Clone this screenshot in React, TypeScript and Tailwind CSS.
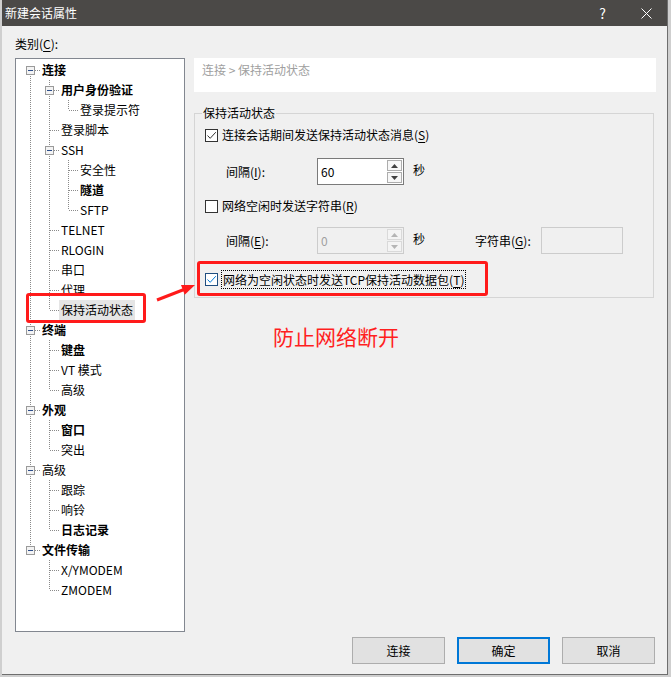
import type { ReactNode } from 'react'

type Node = {
  label: string
  bold?: boolean
  selected?: boolean
  children?: Node[]
}

type Row = {
  node: Node
  depth: number
  guides: boolean[]
  first: boolean
  last: boolean
}

const TREE: Node[] = [
  {
    label: '连接',
    bold: true,
    children: [
      { label: '用户身份验证', bold: true, children: [{ label: '登录提示符' }] },
      { label: '登录脚本' },
      {
        label: 'SSH',
        children: [{ label: '安全性' }, { label: '隧道', bold: true }, { label: 'SFTP' }],
      },
      { label: 'TELNET' },
      { label: 'RLOGIN' },
      { label: '串口' },
      { label: '代理' },
      { label: '保持活动状态', selected: true },
    ],
  },
  {
    label: '终端',
    bold: true,
    children: [{ label: '键盘', bold: true }, { label: 'VT 模式' }, { label: '高级' }],
  },
  {
    label: '外观',
    bold: true,
    children: [{ label: '窗口', bold: true }, { label: '突出' }],
  },
  {
    label: '高级',
    children: [{ label: '跟踪' }, { label: '响铃' }, { label: '日志记录', bold: true }],
  },
  {
    label: '文件传输',
    bold: true,
    children: [{ label: 'X/YMODEM' }, { label: 'ZMODEM' }],
  },
]

function flatten(nodes: Node[], depth: number, guides: boolean[]): Row[] {
  const rows: Row[] = []
  nodes.forEach((node, i) => {
    const last = i === nodes.length - 1
    rows.push({ node, depth, guides, first: i === 0, last })
    if (node.children) {
      rows.push(...flatten(node.children, depth + 1, [...guides, !last]))
    }
  })
  return rows
}

const DOT = '#8a8a8a'

function GuideCell({ line }: { line: boolean }) {
  return (
    <svg width={19} height={20} className="shrink-0">
      {line && <line x1={9.5} y1={0} x2={9.5} y2={20} stroke={DOT} strokeDasharray="1 1" />}
    </svg>
  )
}

function NodeCell({ row }: { row: Row }) {
  const top = row.depth > 0 || !row.first
  const bottom = !row.last
  const expander = !!row.node.children
  return (
    <svg width={19} height={20} className="shrink-0">
      {top && <line x1={9.5} y1={0} x2={9.5} y2={10} stroke={DOT} strokeDasharray="1 1" />}
      {bottom && <line x1={9.5} y1={10} x2={9.5} y2={20} stroke={DOT} strokeDasharray="1 1" />}
      <line x1={10} y1={10.5} x2={19} y2={10.5} stroke={DOT} strokeDasharray="1 1" />
      {expander && (
        <>
          <rect x={5.5} y={6.5} width={8} height={8} fill="#f3f3f3" stroke="#9a9a9a" />
          <line x1={7} y1={10.5} x2={12} y2={10.5} stroke="#2c4d8a" />
        </>
      )}
    </svg>
  )
}

function Acc({ children }: { children: ReactNode }) {
  return <span className="underline underline-offset-2">{children}</span>
}

function CheckBox({ checked, hover }: { checked?: boolean; hover?: boolean }) {
  const color = hover ? '#0078d7' : '#333333'
  return (
    <span
      className={`w-[13px] h-[13px] shrink-0 bg-white border flex items-center justify-center ${
        hover ? 'border-[#1f4e80]' : 'border-[#333333]'
      }`}
    >
      {checked && (
        <svg width={11} height={11}>
          <path d="M1.5 5.5 L4.2 8.3 L9.8 2.2" fill="none" stroke={color} strokeWidth={1} />
        </svg>
      )}
    </span>
  )
}

function SpinBox({ value, disabled }: { value: string; disabled?: boolean }) {
  const arrow = disabled ? '#b5b5b5' : '#404040'
  return (
    <div
      className={`w-[87px] h-[27px] flex border ${
        disabled ? 'border-[#cccccc] bg-[#f0f0f0]' : 'border-[#7a7a7a] bg-white'
      }`}
    >
      <span
        className={`flex-1 pl-[3px] leading-[25px] ${disabled ? 'text-[#a0a0a0]' : 'text-black'}`}
      >
        {value}
      </span>
      <div className="w-[16px] flex flex-col py-[1px] pr-[1px] gap-[1px]">
        {[0, 1].map((i) => (
          <div
            key={i}
            className={`flex-1 flex items-center justify-center border ${
              disabled ? 'border-[#d9d9d9] bg-[#f4f4f4]' : 'border-[#adadad] bg-[#f7f7f7]'
            }`}
          >
            <svg width={7} height={4}>
              <path d={i === 0 ? 'M0 4 L3.5 0 L7 4 Z' : 'M0 0 L3.5 4 L7 0 Z'} fill={arrow} />
            </svg>
          </div>
        ))}
      </div>
    </div>
  )
}

function Button({ label, primary }: { label: string; primary?: boolean }) {
  return (
    <button
      className={`w-[93px] h-[27px] bg-[#e1e1e1] text-[12px] text-black ${
        primary ? 'border-2 border-[#0078d7]' : 'border border-[#adadad]'
      }`}
    >
      {label}
    </button>
  )
}

function App() {
  const rows = flatten(TREE, 0, [])

  return (
    <div className="relative w-[671px] h-[677px] bg-[#cfcfcf] overflow-hidden font-[family-name:'Noto_Sans_CJK_SC',sans-serif] text-[12px] text-black">
      <div className="ml-[2px] w-[666px] h-[675px] flex flex-col border-b border-r border-[#6e6e6e]">
        <div className="h-[26px] shrink-0 bg-[#4b4947] flex items-center text-white">
          <span className="pl-[3px] leading-[16px]">新建会话属性</span>
          <span className="ml-auto mr-[35px] text-[14px] leading-[16px]">?</span>
          <svg width={11} height={11} className="mr-[15px]">
            <path d="M0.5 0.5 L10.5 10.5 M10.5 0.5 L0.5 10.5" stroke="#ffffff" strokeWidth={1} />
          </svg>
        </div>

        <div className="flex-1 bg-[#f0f0f0] pl-[13px] pt-[10px]">
          <div className="leading-[16px]">
            类别(<Acc>C</Acc>):
          </div>

          <div className="mt-[6px] flex items-start gap-[9px]">
            <div className="w-[170px] h-[574px] border border-[#828790] bg-white pt-[1px] pl-[5px]">
              {rows.map((row, idx) => (
                <div key={idx} className="flex items-center h-[20px]">
                  {row.guides.map((g, i) => (
                    <GuideCell key={i} line={g} />
                  ))}
                  <NodeCell row={row} />
                  <span
                    className={`px-[2px] h-[20px] leading-[20px] whitespace-nowrap ${
                      row.node.bold ? 'font-bold' : ''
                    } ${row.node.selected ? 'bg-[#e5e5e5]' : ''}`}
                  >
                    {row.node.label}
                  </span>
                </div>
              ))}
            </div>

            <div className="w-[462px] h-[606px] flex flex-col">
              <div className="h-[34px] bg-white pl-[8px] pt-[4px] leading-[16px] text-[#a0a0a0]">
                连接 &gt; 保持活动状态
              </div>

              <fieldset className="mt-[13px] mr-[2px] border border-[#d5d5d5] pl-[7px] pb-[8px]">
                <legend className="px-[1px] leading-[16px]">保持活动状态</legend>

                <div className="mt-[4px] h-[20px] flex items-center gap-[4px] pl-[3px]">
                  <CheckBox checked />
                  <span className="leading-[16px]">
                    连接会话期间发送保持活动状态消息(<Acc>S</Acc>)
                  </span>
                </div>

                <div className="mt-[13px] flex items-center pl-[24px]">
                  <span className="w-[91px] leading-[16px]">
                    间隔(<Acc>I</Acc>):
                  </span>
                  <SpinBox value="60" />
                  <span className="ml-[9px] leading-[16px] -mt-[4px]">秒</span>
                </div>

                <div className="mt-[11px] h-[20px] flex items-center gap-[4px] pl-[3px]">
                  <CheckBox />
                  <span className="leading-[16px]">
                    网络空闲时发送字符串(<Acc>R</Acc>)
                  </span>
                </div>

                <div className="mt-[11px] flex items-center pl-[24px]">
                  <span className="w-[91px] leading-[16px]">
                    间隔(<Acc>E</Acc>):
                  </span>
                  <SpinBox value="0" disabled />
                  <span className="ml-[9px] leading-[16px] -mt-[4px]">秒</span>
                  <span className="ml-[50px] w-[66px] leading-[16px]">
                    字符串(<Acc>G</Acc>):
                  </span>
                  <div className="w-[82px] h-[27px] border border-[#cccccc] bg-[#f0f0f0]" />
                </div>

                <div className="mt-[15px] h-[20px] flex items-center gap-[3px] pl-[3px]">
                  <CheckBox checked hover />
                  <span className="border border-dotted border-black px-[1px] leading-[17px]">
                    网络为空闲状态时发送TCP保持活动数据包(<Acc>T</Acc>)
                  </span>
                </div>
              </fieldset>

              <div className="mt-[27px] ml-[79px] text-[21px] leading-[22px] text-[#ff1f1f]">
                防止网络断开
              </div>

              <div className="mt-auto flex justify-end gap-[12px] pr-[1px]">
                <Button label="连接" />
                <Button label="确定" primary />
                <Button label="取消" />
              </div>
            </div>
          </div>
        </div>
      </div>

      {/* annotations */}
      <div className="absolute left-[26px] top-[293px] w-[120px] h-[30px] border-[3px] border-[#ff1a1a] rounded-[3px]" />
      <div className="absolute left-[197px] top-[261px] w-[291px] h-[35px] border-[3px] border-[#ff1a1a] rounded-[3px]" />
      <svg className="absolute left-[150px] top-[275px]" width={50} height={35}>
        <line x1={7} y1={25} x2={34} y2={14.5} stroke="#ff1a1a" strokeWidth={3} />
        <polygon points="45,10 34.7,19.8 31,10" fill="#ff1a1a" />
      </svg>
    </div>
  )
}

export default App
